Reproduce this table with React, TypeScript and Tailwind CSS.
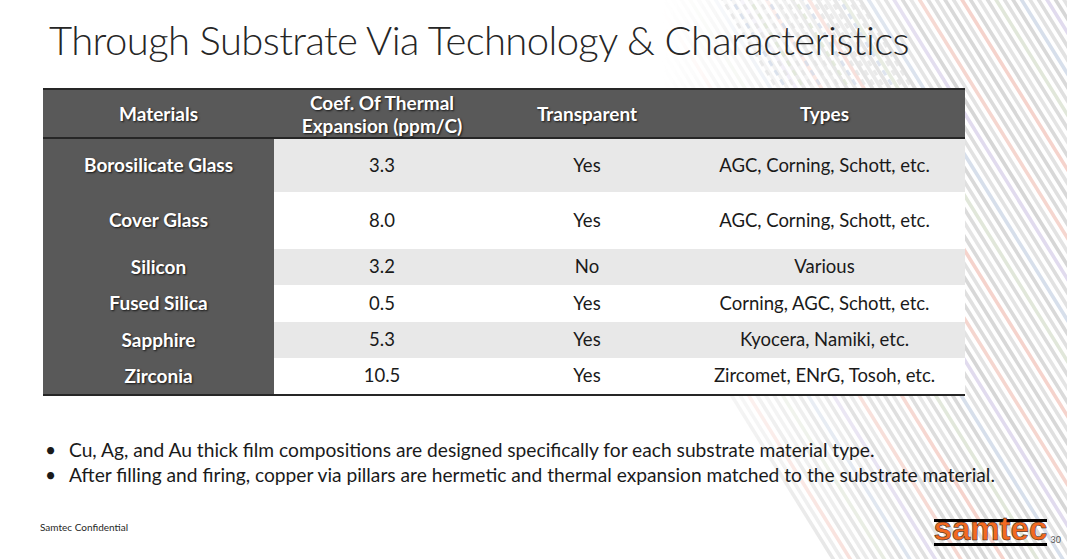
import React from "react";

const rows = [
  { m: "Borosilicate Glass", c: "3.3", t: "Yes", y: "AGC, Corning, Schott, etc.", h: "h-[53px]", bg: "bg-[#e8e8e8]" },
  { m: "Cover Glass", c: "8.0", t: "Yes", y: "AGC, Corning, Schott, etc.", h: "h-[57px]", bg: "bg-white" },
  { m: "Silicon", c: "3.2", t: "No", y: "Various", h: "h-[36px]", bg: "bg-[#e8e8e8]" },
  { m: "Fused Silica", c: "0.5", t: "Yes", y: "Corning, AGC, Schott, etc.", h: "h-[37px]", bg: "bg-white" },
  { m: "Sapphire", c: "5.3", t: "Yes", y: "Kyocera, Namiki, etc.", h: "h-[36px]", bg: "bg-[#e8e8e8]" },
  { m: "Zirconia", c: "10.5", t: "Yes", y: "Zircomet, ENrG, Tosoh, etc.", h: "h-[36px]", bg: "bg-white" },
];

const stripeColors = [
  "#d8d8d8", "#e2e2e2", "#f5d3cc", "#dadada", "#e4e4e4", "#dcdcdc", "#e1e7da",
  "#e0e0e0", "#d9d9d9", "#d7dfeb", "#e2e2e2", "#dddddd", "#e1dbee", "#d6d6d6",
  "#e3e3e3", "#f5d6cf", "#dbdbdb", "#e0e0e0",
];

function Stripes() {
  const lines = [];
  for (let i = 0; i < 80; i++) {
    const x0 = 480 + i * 8.5;
    lines.push(
      <line
        key={i}
        x1={x0}
        y1={-10}
        x2={x0 + 360}
        y2={570}
        stroke={stripeColors[i % stripeColors.length]}
        strokeWidth={3.6}
      />
    );
  }
  const dashes = [];
  for (let i = 0; i < 16; i++) {
    const x0 = 720 + i * 9;
    dashes.push(
      <line
        key={i}
        x1={x0}
        y1={-5}
        x2={x0 + 70}
        y2={110}
        stroke={i % 4 === 1 ? "#d3dcea" : i % 5 === 3 ? "#dfe7d6" : "#e4e4e4"}
        strokeWidth={3}
        strokeDasharray="6 5"
      />
    );
  }
  return (
    <svg className="absolute inset-0 pointer-events-none" width="1067" height="559" viewBox="0 0 1067 559">
      <defs>
        <linearGradient id="fade" x1="0" y1="0" x2="1" y2="0">
          <stop offset="0.62" stopColor="#fff" stopOpacity="0" />
          <stop offset="0.8" stopColor="#fff" stopOpacity="0.7" />
          <stop offset="0.9" stopColor="#fff" stopOpacity="1" />
        </linearGradient>
        <mask id="m">
          <rect x="0" y="0" width="1067" height="559" fill="url(#fade)" />
        </mask>
      </defs>
      <g mask="url(#m)">{lines}</g>
      <g opacity="0.75">{dashes}</g>
    </svg>
  );
}

function Logo() {
  return (
    <div className="relative w-[113px] h-[32px]">
      <div className="absolute left-0 right-0 top-[3px] h-[3px] bg-black" />
      <div className="absolute left-0 right-0 bottom-[2px] h-[3px] bg-black" />
      <div
        className="absolute left-0 top-[-4px] text-[33px] leading-none font-bold text-[#f26a21]"
        style={{ fontFamily: '"Liberation Sans", Arial, sans-serif', WebkitTextStroke: "0.5px #1a1a1a" }}
      >
        samtec
      </div>
    </div>
  );
}

export default function App() {
  const shadow = "[text-shadow:1px_1px_2px_rgba(0,0,0,0.75)]";
  return (
    <div
      className="relative w-[1067px] h-[559px] bg-white overflow-hidden text-[#1a1a1a]"
      style={{ fontFamily: 'Lato, "Open Sans", sans-serif' }}
    >
      <Stripes />
      <div className="relative flex flex-col h-full">
        <h1 className="pl-[49px] pt-[14px] text-[40px] leading-[52px] font-light text-[#262626] tracking-[-0.6px]">
          Through Substrate Via Technology &amp; Characteristics
        </h1>
        <div className="ml-[43px] mt-[22px] w-[922px] flex flex-col">
          <div className="flex h-[51px] bg-[#595959] border-t-2 border-b-2 border-[#262626] text-white font-bold text-[19px] leading-[23px]">
            <div className={`w-[231px] flex items-center justify-center ${shadow}`}>Materials</div>
            <div className={`w-[216px] flex items-center justify-center text-center ${shadow}`}>
              Coef. Of Thermal
              <br />
              Expansion (ppm/C)
            </div>
            <div className={`w-[194px] flex items-center justify-center ${shadow}`}>Transparent</div>
            <div className={`flex-1 flex items-center justify-center ${shadow}`}>Types</div>
          </div>
          {rows.map((r) => (
            <div key={r.m} className={`flex ${r.h} ${r.bg} text-[18.5px]`}>
              <div className={`w-[231px] bg-[#595959] text-white font-bold text-[19px] flex items-center justify-center ${shadow}`}>
                {r.m}
              </div>
              <div className="w-[216px] flex items-center justify-center">{r.c}</div>
              <div className="w-[194px] flex items-center justify-center">{r.t}</div>
              <div className="flex-1 flex items-center justify-center">{r.y}</div>
            </div>
          ))}
          <div className="h-[2px] bg-[#262626]" />
        </div>
        <ul className="mt-[41px] ml-[45px] text-[19.2px] leading-[25px]">
          <li className="flex">
            <span className="w-[24px]">•</span>
            <span>Cu, Ag, and Au thick film compositions are designed specifically for each substrate material type.</span>
          </li>
          <li className="flex">
            <span className="w-[24px]">•</span>
            <span>After filling and firing, copper via pillars are hermetic and thermal expansion matched to the substrate material.</span>
          </li>
        </ul>
        <div className="flex items-end mt-auto mb-[11px] pr-[6px]">
          <div className="ml-[40px] mb-[13px] text-[10px] text-[#262626]">Samtec Confidential</div>
          <div className="ml-auto flex items-end gap-[4px]">
            <Logo />
            <div className="text-[9px] text-[#555] mb-[2px]">30</div>
          </div>
        </div>
      </div>
    </div>
  );
}
